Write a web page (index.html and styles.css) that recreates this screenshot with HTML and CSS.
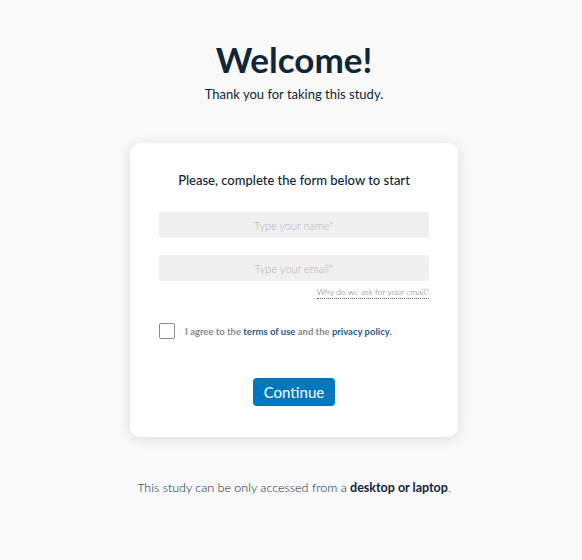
FILE: index.html
```html
<!DOCTYPE html>
<html lang="en">
<head>
    <meta charset="UTF-8">
    <meta name="viewport" content="width=device-width, initial-scale=1.0">
    <title>Welcome</title>
    <link rel="stylesheet" href="styles.css">
</head>
<body>
    <div class="page">
        <h1 class="title">Welcome!</h1>
        <p class="subtitle">Thank you for taking this study.</p>

        <form class="card">
            <h2 class="card-title">Please, complete the form below to start</h2>
            <input class="field" type="text" placeholder="Type your name*">
            <input class="field field-email" type="email" placeholder="Type your email*">
            <div class="help-row">
                <a class="help" href="#">Why do we ask for your email?</a>
            </div>
            <label class="agree">
                <input type="checkbox" class="check">
                <span class="box"></span>
                <span class="agree-text">I agree to the <a href="#">terms of use</a> and the <a href="#">privacy policy.</a></span>
            </label>
            <div class="actions">
                <button type="button" class="continue">Continue</button>
            </div>
        </form>

        <p class="note">This study can be only accessed from a <strong>desktop or laptop</strong>.</p>
    </div>
</body>
</html>
```

FILE: styles.css
```css
:root {
    --bg: #f9f9f9;
    --navy: #0f2638;
    --blue: #0277bd;
    --link: #1d5c8c;
    --field-bg: #f0f0f0;
}

* {
    box-sizing: border-box;
}

body {
    margin: 0;
    background: var(--bg);
    font-family: 'Lato', 'Open Sans', sans-serif;
    color: var(--navy);
}

.page {
    display: flex;
    flex-direction: column;
    align-items: center;
    padding: 37px 0 0 6px;
}

.title {
    margin: 0;
    font-size: 35px;
    line-height: 44px;
    font-weight: 700;
    color: var(--navy);
}

.subtitle {
    margin: 4px 0 0;
    font-size: 13px;
    line-height: 18px;
    color: var(--navy);
}

.card {
    width: 328px;
    margin-top: 40px;
    padding: 28px 29px 31px;
    background: #fff;
    border-radius: 10px;
    box-shadow: 0 2px 14px rgba(0, 0, 0, 0.12);
    display: flex;
    flex-direction: column;
}

.card-title {
    margin: 0 0 23px;
    font-size: 13px;
    line-height: 18px;
    font-weight: 500;
    text-align: center;
    color: var(--navy);
}

.field {
    width: 270px;
    height: 26px;
    border: none;
    border-radius: 3px;
    background: var(--field-bg);
    font-family: inherit;
    font-size: 11px;
    font-weight: 300;
    text-align: center;
    outline: none;
}

.field::placeholder {
    color: #b0b0b0;
}

.field-email {
    margin-top: 17px;
}

.help-row {
    display: flex;
    justify-content: flex-end;
    margin-top: 5px;
}

.help {
    font-size: 8.5px;
    line-height: 12px;
    font-weight: 300;
    color: #6a6a75;
    text-decoration: none;
    border-bottom: 1px dotted #666;
}

.agree {
    display: flex;
    align-items: center;
    margin-top: 24px;
    cursor: pointer;
}

.check {
    display: none;
}

.box {
    width: 16px;
    height: 16px;
    border: 1px solid #8a8a8a;
    border-radius: 2px;
    background: #fff;
    flex: none;
}

.agree-text {
    margin-left: 10px;
    font-size: 9.5px;
    font-weight: 700;
    color: #888;
}

.agree-text a {
    color: var(--link);
    text-decoration: none;
}

.actions {
    display: flex;
    justify-content: center;
    margin-top: 39px;
}

.continue {
    height: 28px;
    padding: 0 11px;
    border: none;
    border-radius: 4px;
    background: var(--blue);
    color: #fff;
    font-family: inherit;
    font-size: 15px;
    cursor: pointer;
}

.note {
    margin: 43px 0 0;
    font-size: 12.5px;
    line-height: 16px;
    font-weight: 300;
    color: var(--navy);
}

.note strong {
    font-weight: 700;
}
```
